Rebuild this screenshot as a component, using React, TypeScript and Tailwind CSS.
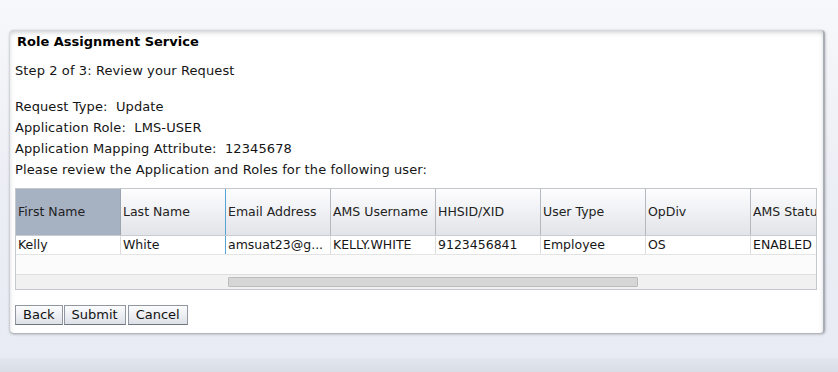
import React from 'react';

const columns = ['First Name', 'Last Name', 'Email Address', 'AMS Username', 'HHSID/XID', 'User Type', 'OpDiv', 'AMS Status'];
const row = ['Kelly', 'White', 'amsuat23@g...', 'KELLY.WHITE', '9123456841', 'Employee', 'OS', 'ENABLED'];

const font = { fontFamily: '"DejaVu Sans", Verdana, sans-serif' };

const App: React.FC = () => {
  return (
    <div className="w-[838px] h-[372px] overflow-hidden flex flex-col bg-gradient-to-b from-[#f7f8fb] via-[#eceef5] to-[#e8ebf3] text-[#151515]" style={font}>
      <div className="pt-[30px] pl-[10px] flex-1">
        {/* Panel */}
        <div className="w-[815px] h-[303px] bg-white rounded-[4px] border-r-2 border-[#a9adb5] shadow-[0_1px_3px_rgba(0,0,0,0.35),inset_0_3px_5px_-1px_rgba(90,98,110,0.35)] pl-[5px] pt-[4px]">
          <h1 className="text-[13px] font-bold leading-[16px] pl-[2px] text-black">Role Assignment Service</h1>
          <p className="text-[13px] leading-[16px] mt-[13px] tracking-[0.1px]">Step 2 of 3: Review your Request</p>

          <div className="mt-[20px] flex flex-col gap-[5px] text-[13px] leading-[16px] tracking-[0.1px]">
            <div>Request Type:&nbsp; Update</div>
            <div>Application Role:&nbsp; LMS-USER</div>
            <div>Application Mapping Attribute:&nbsp; 12345678</div>
            <div>Please review the Application and Roles for the following user:</div>
          </div>

          {/* Table */}
          <div className="mt-[10px] w-[802px] border border-[#c4c7cc] overflow-hidden">
            <div className="flex h-[47px] border-b border-[#c9ccd1]">
              {columns.map((c, i) => (
                <div
                  key={c}
                  className={`w-[105px] shrink-0 flex items-center pl-[2px] pt-[1px] text-[12.5px] whitespace-nowrap overflow-hidden border-r ${
                    i === 0
                      ? 'bg-[#a6b1c2] border-[#9aa3b0] text-[#222]'
                      : 'bg-gradient-to-b from-[#fdfdfe] to-[#e2e4e9] text-[#222]'
                  } ${i === 1 ? 'border-[#56a3d6]' : i !== 0 ? 'border-[#b5b8be]' : ''}`}
                >
                  {c}
                </div>
              ))}
            </div>
            <div className="flex h-[19px] border-b border-[#e4e4e4]">
              {row.map((v, i) => (
                <div
                  key={i}
                  className={`w-[105px] shrink-0 flex items-center pl-[2px] text-[12.5px] whitespace-nowrap overflow-hidden border-r ${
                    i === 1 ? 'border-[#56a3d6]' : 'border-[#dcdcdc]'
                  }`}
                >
                  {v}
                </div>
              ))}
            </div>
            <div className="h-[19px] bg-[#fbfbfb]" />
            <div className="h-[15px] bg-[#f1f1f1] border-t border-[#dedede] pl-[212px] pt-[2px]">
              <div className="w-[410px] h-[10px] bg-[#d6d6d6] border border-[#bcbcbc] rounded-[1px]" />
            </div>
          </div>

          {/* Buttons */}
          <div className="mt-[15px] flex gap-[1px] text-[13px]">
            {['Back', 'Submit', 'Cancel'].map((b, i) => (
              <button
                key={b}
                className={`h-[20px] px-[7px] leading-[16px] bg-gradient-to-b from-[#fcfcfd] to-[#dde1e8] border border-[#9197a0] border-b-[#6f747c] text-[#111] ${i === 2 ? 'ml-[1px]' : ''}`}
                style={font}
              >
                {b}
              </button>
            ))}
          </div>
        </div>
      </div>
      <div className="h-[14px] bg-gradient-to-b from-[#e2e6ee] to-[#d9dde7]" />
    </div>
  );
};

export default App;
